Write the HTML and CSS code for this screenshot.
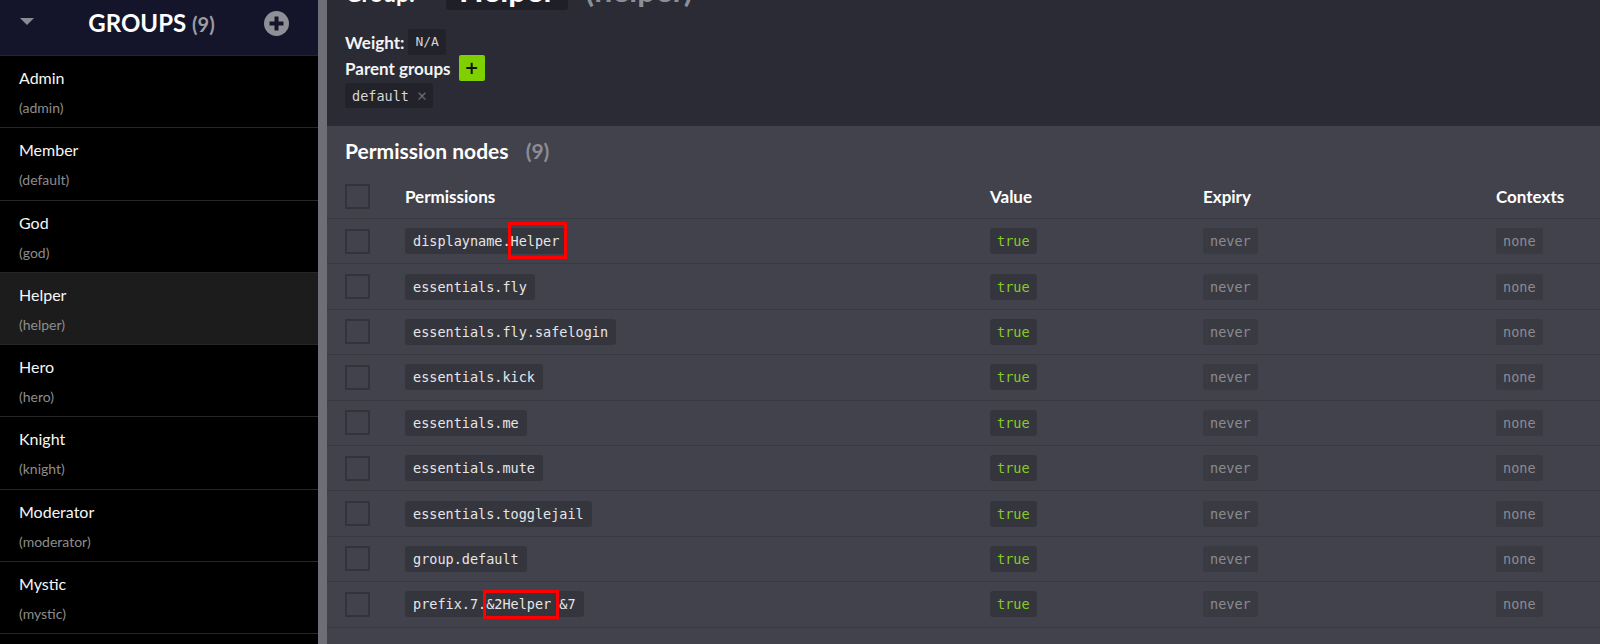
FILE: index.html
```html
<!DOCTYPE html>
<html lang="en">
<head>
<meta charset="utf-8">
<title>Groups - Helper</title>
<link rel="stylesheet" href="styles.css">
</head>
<body>
<div class="app">
  <aside class="sidebar">
    <div class="side-head">
      <span class="caret"></span>
      <h2 class="side-title">GROUPS <span class="count">(9)</span></h2>
      <span class="add-circle">
        <svg width="25" height="25" viewBox="0 0 25 25"><circle cx="12.5" cy="12.5" r="12.5" fill="#8f8f97"/><rect x="5.5" y="10.5" width="14" height="4" fill="#14142a"/><rect x="10.5" y="5.5" width="4" height="14" fill="#14142a"/></svg>
      </span>
    </div>
    <ul class="group-list">
      <li class="group"><div class="g-name">Admin</div><div class="g-id">(admin)</div></li>
      <li class="group"><div class="g-name">Member</div><div class="g-id">(default)</div></li>
      <li class="group"><div class="g-name">God</div><div class="g-id">(god)</div></li>
      <li class="group active"><div class="g-name">Helper</div><div class="g-id">(helper)</div></li>
      <li class="group"><div class="g-name">Hero</div><div class="g-id">(hero)</div></li>
      <li class="group"><div class="g-name">Knight</div><div class="g-id">(knight)</div></li>
      <li class="group"><div class="g-name">Moderator</div><div class="g-id">(moderator)</div></li>
      <li class="group"><div class="g-name">Mystic</div><div class="g-id">(mystic)</div></li>
      <li class="group"><div class="g-name">Owner</div><div class="g-id">(owner)</div></li>
    </ul>
  </aside>
  <div class="divider"></div>
  <main class="main">
    <section class="group-head">
      <h1 class="title"><span class="title-label">Group:</span><span class="title-name">Helper</span><span class="title-id">(helper)</span></h1>
      <div class="meta-row"><span class="label">Weight:</span><code class="val-box">N/A</code></div>
      <div class="meta-row"><span class="label">Parent groups</span><button class="add-btn">+</button></div>
      <div class="chips"><span class="parent-chip">default<span class="x">×</span></span></div>
    </section>
    <section class="perms">
      <h2 class="perm-title">Permission nodes <span class="count">(9)</span></h2>
      <div class="table">
        <div class="tr th">
          <div class="cell"><span class="check"></span></div>
          <div class="cell">Permissions</div>
          <div class="cell">Value</div>
          <div class="cell">Expiry</div>
          <div class="cell">Contexts</div>
        </div>
        <div class="tr">
          <div class="cell"><span class="check"></span></div>
          <div class="cell"><span class="chip">displayname.<span class="hl hl-a">Helper</span></span></div>
          <div class="cell"><span class="chip val">true</span></div>
          <div class="cell"><span class="chip muted">never</span></div>
          <div class="cell"><span class="chip muted">none</span></div>
        </div>
        <div class="tr">
          <div class="cell"><span class="check"></span></div>
          <div class="cell"><span class="chip">essentials.fly</span></div>
          <div class="cell"><span class="chip val">true</span></div>
          <div class="cell"><span class="chip muted">never</span></div>
          <div class="cell"><span class="chip muted">none</span></div>
        </div>
        <div class="tr">
          <div class="cell"><span class="check"></span></div>
          <div class="cell"><span class="chip">essentials.fly.safelogin</span></div>
          <div class="cell"><span class="chip val">true</span></div>
          <div class="cell"><span class="chip muted">never</span></div>
          <div class="cell"><span class="chip muted">none</span></div>
        </div>
        <div class="tr">
          <div class="cell"><span class="check"></span></div>
          <div class="cell"><span class="chip">essentials.kick</span></div>
          <div class="cell"><span class="chip val">true</span></div>
          <div class="cell"><span class="chip muted">never</span></div>
          <div class="cell"><span class="chip muted">none</span></div>
        </div>
        <div class="tr">
          <div class="cell"><span class="check"></span></div>
          <div class="cell"><span class="chip">essentials.me</span></div>
          <div class="cell"><span class="chip val">true</span></div>
          <div class="cell"><span class="chip muted">never</span></div>
          <div class="cell"><span class="chip muted">none</span></div>
        </div>
        <div class="tr">
          <div class="cell"><span class="check"></span></div>
          <div class="cell"><span class="chip">essentials.mute</span></div>
          <div class="cell"><span class="chip val">true</span></div>
          <div class="cell"><span class="chip muted">never</span></div>
          <div class="cell"><span class="chip muted">none</span></div>
        </div>
        <div class="tr">
          <div class="cell"><span class="check"></span></div>
          <div class="cell"><span class="chip">essentials.togglejail</span></div>
          <div class="cell"><span class="chip val">true</span></div>
          <div class="cell"><span class="chip muted">never</span></div>
          <div class="cell"><span class="chip muted">none</span></div>
        </div>
        <div class="tr">
          <div class="cell"><span class="check"></span></div>
          <div class="cell"><span class="chip">group.default</span></div>
          <div class="cell"><span class="chip val">true</span></div>
          <div class="cell"><span class="chip muted">never</span></div>
          <div class="cell"><span class="chip muted">none</span></div>
        </div>
        <div class="tr">
          <div class="cell"><span class="check"></span></div>
          <div class="cell"><span class="chip">prefix.7.<span class="hl hl-b">&amp;2Helper</span> &amp;7</span></div>
          <div class="cell"><span class="chip val">true</span></div>
          <div class="cell"><span class="chip muted">never</span></div>
          <div class="cell"><span class="chip muted">none</span></div>
        </div>
      </div>
    </section>
  </main>
</div>
</body>
</html>
```

FILE: styles.css
```css
* { box-sizing: content-box; }
html, body {
  margin: 0;
  padding: 0;
}
body {
  width: 1600px;
  height: 644px;
  overflow: hidden;
  font-family: Lato, "Noto Sans", sans-serif;
  background: #42424c;
  color: #f2f2f2;
}
.app {
  display: flex;
  height: 644px;
}

/* ---------- sidebar ---------- */
.sidebar {
  width: 318px;
  flex: none;
  background: #000;
  overflow: hidden;
}
.side-head {
  height: 47px;
  padding: 0 29px 8px 20px;
  border-bottom: 1px solid #23233a;
  background: #14142a;
  display: flex;
  align-items: center;
}
.caret {
  width: 0;
  height: 0;
  border-left: 7px solid transparent;
  border-right: 7px solid transparent;
  border-top: 7px solid #8b8b93;
  margin-bottom: 4px;
}
.side-title {
  flex: 1;
  margin: 0;
  padding-left: 5px;
  text-align: center;
  font-size: 24px;
  line-height: 28px;
  font-weight: 700;
  color: #fff;
}
.side-title .count {
  font-size: 20px;
  color: #9c9ca4;
}
.add-circle {
  display: flex;
  width: 25px;
  height: 25px;
}
.group-list {
  list-style: none;
  margin: 0;
  padding: 0;
}
.group {
  padding: 12px 19px 9.3px;
  border-bottom: 1px solid #262626;
}
.group.active {
  background: #1c1c1c;
}
.g-name {
  font-size: 16px;
  line-height: 20px;
  color: #f6f6f6;
}
.g-id {
  margin-top: 10px;
  font-size: 14px;
  line-height: 20px;
  color: #8d8d8d;
}
.divider {
  width: 9px;
  flex: none;
  background: #6e6e77;
}

/* ---------- main ---------- */
.main {
  flex: 1;
  min-width: 0;
  background: #42424c;
  overflow: hidden;
}
.group-head {
  background: #2b2b36;
  padding: 0 18px 18px;
}
.title {
  display: flex;
  align-items: baseline;
  height: 40px;
  margin: -30px 0 0;
  font-size: 32px;
  font-weight: 700;
  line-height: 40px;
  color: #fff;
}
.title-label {
  font-size: 23px;
}
.title-name {
  margin-left: 31px;
  padding: 0 13px;
  background: #1f1f28;
  border-radius: 3px;
}
.title-id {
  margin-left: 17px;
  color: #8e8e96;
}
.meta-row {
  display: flex;
  align-items: center;
  height: 26px;
}
.title + .meta-row {
  margin-top: 19px;
}
.label {
  font-size: 17px;
  font-weight: 700;
  color: #f4f4f4;
}
.val-box {
  margin-left: 4px;
  height: 26px;
  line-height: 26px;
  padding: 0 7px;
  border-radius: 3px;
  background: #22222b;
  color: #d4d4d4;
  font-family: "DejaVu Sans Mono", monospace;
  font-size: 13px;
}
.add-btn {
  margin-left: 8px;
  width: 26px;
  height: 26px;
  padding: 0;
  border: none;
  border-radius: 2px;
  background: #7fd000;
  color: #111;
  font-family: "DejaVu Sans", sans-serif;
  font-size: 17px;
  font-weight: 700;
  line-height: 26px;
}
.chips {
  margin-top: 2px;
  display: flex;
}
.parent-chip {
  display: inline-flex;
  align-items: center;
  height: 25px;
  padding: 0 6px 0 7px;
  border-radius: 3px;
  background: #22222b;
  color: #d8d8d8;
  font-family: "DejaVu Sans Mono", monospace;
  font-size: 13.5px;
}
.parent-chip .x {
  margin-left: 8px;
  color: #6e6e76;
  font-family: Lato, sans-serif;
  font-size: 17px;
}

/* ---------- permissions ---------- */
.perm-title {
  margin: 0 0 11px;
  padding: 12px 18px 0;
  font-size: 21px;
  line-height: 25px;
  font-weight: 700;
  color: #fff;
}
.perm-title .count {
  margin-left: 12px;
  color: #8c8c94;
}
.tr {
  display: grid;
  grid-template-columns: 60px 585px 213px 293px 1fr;
  align-items: center;
  height: 44.4px;
  padding-left: 18px;
  border-bottom: 1px solid #393942;
}
.tr.th {
  height: 44px;
  font-size: 17px;
  font-weight: 700;
  color: #fff;
}
.cell {
  justify-self: start;
  display: flex;
  align-items: center;
}
.check {
  display: block;
  width: 21px;
  height: 21px;
  border: 2px solid #33333b;
  border-radius: 1px;
}
.chip {
  display: inline-block;
  height: 26px;
  line-height: 26px;
  padding: 0 8px;
  border-radius: 3px;
  background: #35353e;
  color: #e6e6e6;
  font-family: "DejaVu Sans Mono", monospace;
  font-size: 13.5px;
  white-space: pre;
}
.chip.val {
  padding: 0 7px;
  color: #86cc2a;
}
.chip.muted {
  padding: 0 7px;
  background: #3a3a43;
  color: #8b8b92;
}
.hl {
  position: relative;
}
.hl::after {
  content: "";
  position: absolute;
  left: -3px;
  right: -8px;
  border: 3px solid #ff0000;
}
.hl-a::after {
  top: -11px;
  bottom: -10px;
}
.hl-b::after {
  top: -6px;
  bottom: -7px;
}
```
